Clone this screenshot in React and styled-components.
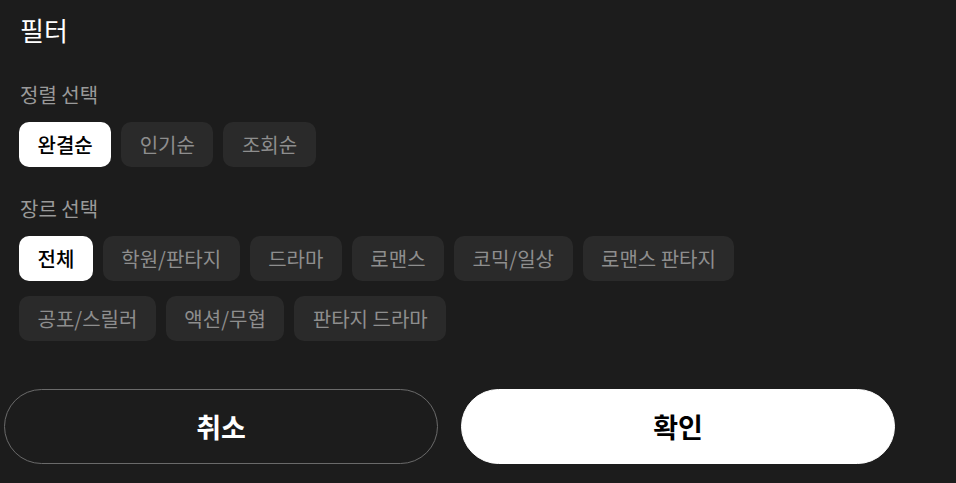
import React, { useState } from 'react';
import styled, { createGlobalStyle } from 'styled-components';

const GlobalStyle = createGlobalStyle`
  html, body {
    margin: 0;
    padding: 0;
    background: #1c1c1c;
  }
  body {
    font-family: "Noto Sans CJK KR", "Noto Sans", sans-serif;
  }
`

const StyledPage = styled.div`
  width: 956px;
  height: 483px;
  background: #1c1c1c;
  color: #ffffff;
  box-sizing: border-box;
  padding-top: 14px;
`

const StyledContent = styled.div`
  padding: 0 19px;
`

const StyledTitle = styled.div`
  font-size: 26px;
  line-height: 32px;
  height: 32px;
  padding-left: 1px;
  color: #ffffff;
`

const StyledLabel = styled.div`
  font-size: 20px;
  line-height: 26px;
  padding-left: 1px;
  color: #9a9a9a;
  margin: ${props => props.first ? '36px' : '29px'} 0 14px;
`

const StyledChips = styled.div`
  display: flex;
  flex-wrap: wrap;
  gap: 15px 10px;
  max-width: 740px;
`

const StyledChip = styled.button`
  height: 45px;
  padding: 0 18.5px;
  border: none;
  border-radius: 10px;
  font-family: inherit;
  font-size: 20px;
  font-weight: ${props => props.active ? 500 : 400};
  background: ${props => props.active ? '#ffffff' : '#2a2a2a'};
  color: ${props => props.active ? '#000000' : '#8e8e8e'};
  cursor: pointer;
  white-space: nowrap;
`

const StyledFooter = styled.div`
  display: flex;
  gap: 23px;
  padding-left: 4px;
  margin-top: 48px;
`

const StyledAction = styled.button`
  width: 434px;
  height: 75px;
  border-radius: 38px;
  font-family: inherit;
  font-size: 27px;
  font-weight: 700;
  cursor: pointer;
  border: 1px solid ${props => props.primary ? '#ffffff' : '#6a6a6a'};
  background: ${props => props.primary ? '#ffffff' : 'transparent'};
  color: ${props => props.primary ? '#000000' : '#ffffff'};
`

const sorts = ['완결순', '인기순', '조회순'];
const genres = [
  '전체',
  '학원/판타지',
  '드라마',
  '로맨스',
  '코믹/일상',
  '로맨스 판타지',
  '공포/스릴러',
  '액션/무협',
  '판타지 드라마'
];

export default function App() {
  const [sort, setSort] = useState('완결순');
  const [genre, setGenre] = useState('전체');

  return (
    <StyledPage>
      <GlobalStyle />
      <StyledContent>
        <StyledTitle>필터</StyledTitle>

        {/* 정렬 */}
        <StyledLabel first>정렬 선택</StyledLabel>
        <StyledChips>
          {sorts.map(s => (
            <StyledChip key={s} active={s === sort} onClick={() => setSort(s)}>{s}</StyledChip>
          ))}
        </StyledChips>

        {/* 장르 */}
        <StyledLabel>장르 선택</StyledLabel>
        <StyledChips>
          {genres.map(g => (
            <StyledChip key={g} active={g === genre} onClick={() => setGenre(g)}>{g}</StyledChip>
          ))}
        </StyledChips>
      </StyledContent>

      <StyledFooter>
        <StyledAction>취소</StyledAction>
        <StyledAction primary>확인</StyledAction>
      </StyledFooter>
    </StyledPage>
  );
}
